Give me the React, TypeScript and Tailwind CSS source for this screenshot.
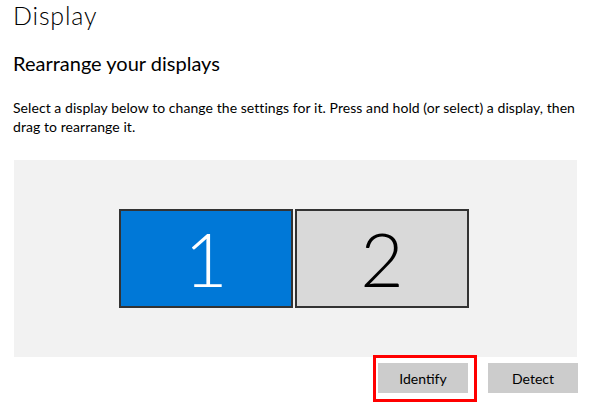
import React from 'react';

const Monitor = ({ n, active }: { n: number; active?: boolean }) => (
  <div
    className={`w-[174px] h-[99px] border-2 border-[#333333] flex items-center justify-center ${
      active ? 'bg-[#0078d7] text-white' : 'bg-[#d9d9d9] text-black'
    }`}
  >
    <span className="text-[75px] font-light leading-none">{n}</span>
  </div>
);

export default function App() {
  return (
    <div className="w-[591px] h-[406px] bg-white text-black overflow-hidden font-['Lato',sans-serif]">
      <h1 className="pl-[13px] text-[25px] leading-[30px] font-light tracking-[0.8px]">Display</h1>
      <h2 className="mt-[19px] pl-[13px] text-[20px] leading-[28px]">Rearrange your displays</h2>
      <p className="mt-[21px] pl-[13px] w-[580px] text-[14px] leading-[19px] tracking-[0.06px]">
        Select a display below to change the settings for it. Press and hold (or select) a display, then drag to
        rearrange it.
      </p>

      <div className="mt-[24px] ml-[14px] w-[563px] h-[197px] bg-[#f2f2f2] flex items-center pl-[105px] gap-[2px]">
        <Monitor n={1} active />
        <Monitor n={2} />
      </div>

      <div className="mt-[6px] ml-[378px] flex gap-[20px]">
        <div className="relative">
          <button className="w-[90px] h-[30px] bg-[#cccccc] text-[14px]">Identify</button>
          <div className="absolute left-[-5px] top-[-8px] w-[104px] h-[47px] border-[3px] border-[#ff0000] pointer-events-none" />
        </div>
        <button className="w-[90px] h-[30px] bg-[#cccccc] text-[14px]">Detect</button>
      </div>
    </div>
  );
}
